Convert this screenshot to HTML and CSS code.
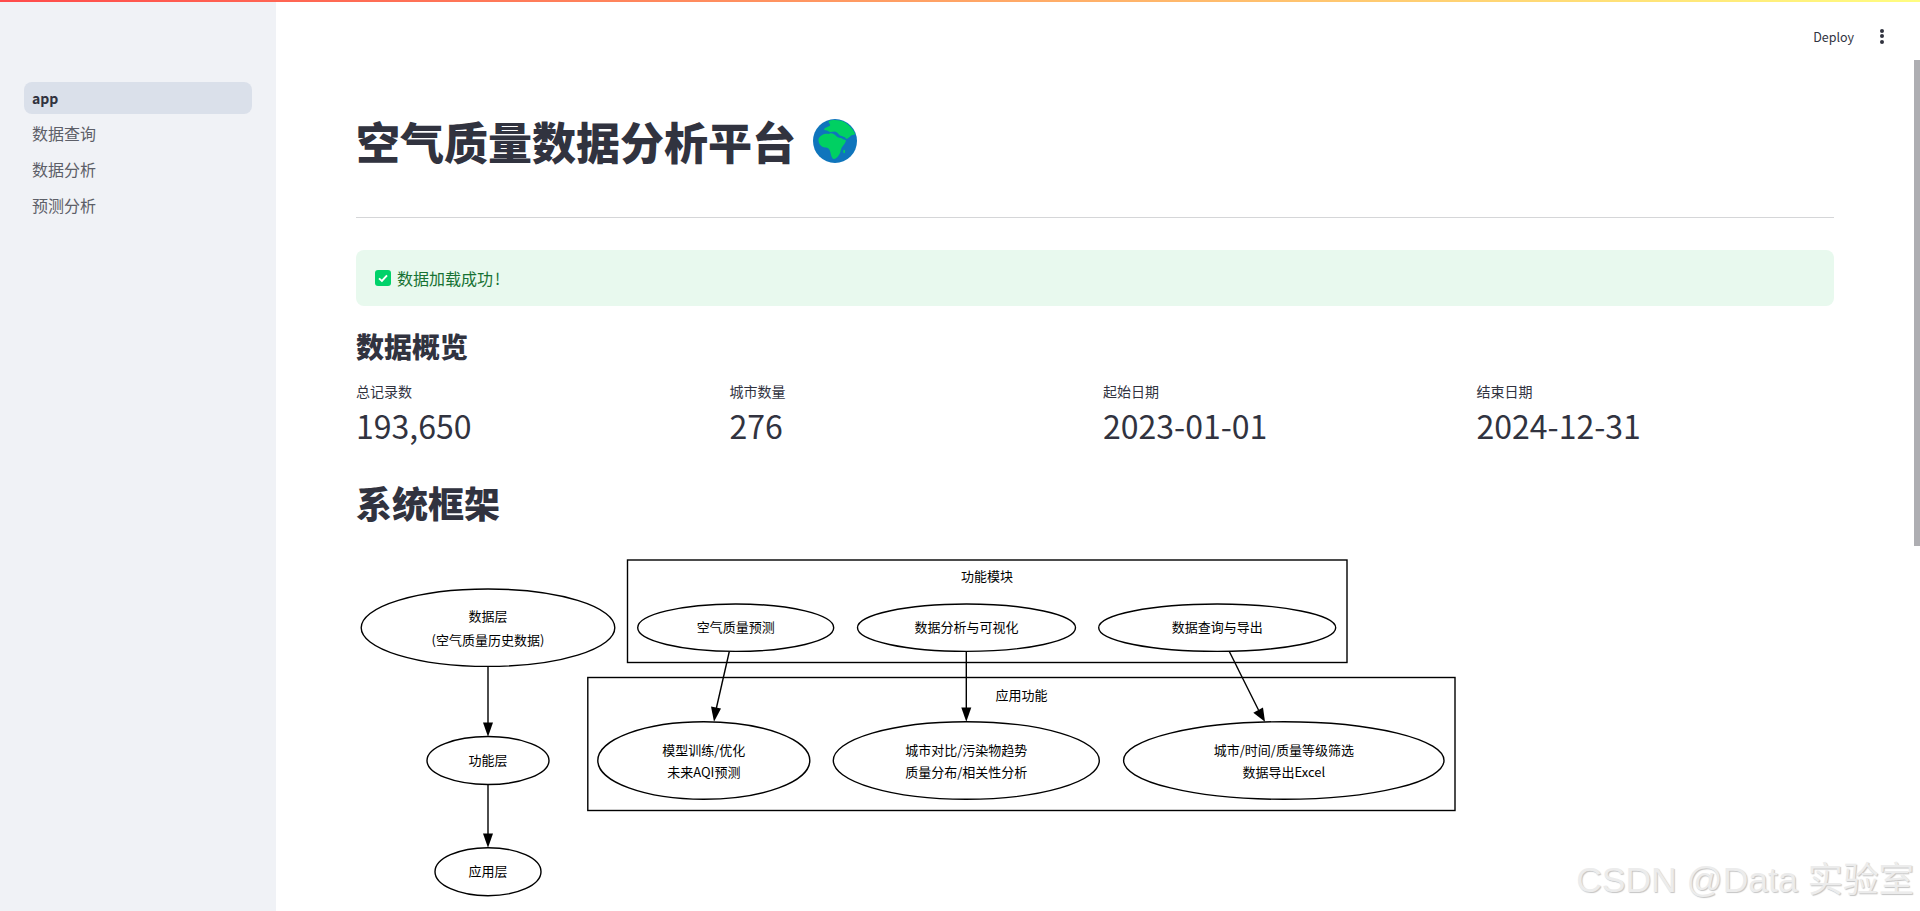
FILE: index.html
```html
<!DOCTYPE html>
<html lang="zh-CN">
<head>
    <meta charset="UTF-8">
    <meta name="viewport" content="width=device-width, initial-scale=1.0">
    <title>空气质量数据分析平台</title>
    <link rel="stylesheet" href="styles.css">
</head>
<body>
    <div class="top-line"></div>

    <div class="app">
        <aside class="sidebar">
            <nav class="nav">
                <a class="nav-item active">app</a>
                <a class="nav-item">数据查询</a>
                <a class="nav-item">数据分析</a>
                <a class="nav-item">预测分析</a>
            </nav>
        </aside>

        <main class="main">
            <header class="topbar">
                <span class="deploy">Deploy</span>
                <span class="kebab"><i></i><i></i><i></i></span>
            </header>

            <div class="content">
                <h1 class="title">空气质量数据分析平台
                    <svg class="globe" viewBox="0 0 130 130">
                        <circle cx="65" cy="65" r="65" fill="#0f75bc"/>
                        <path class="land" d="M47 6 C58 1 80 2 95 10 C108 18 118 30 125 44 C120 48 114 46 111 50 C106 54 102 60 98 58 C94 52 88 52 80 49 C74 44 72 38 64 37 C56 38 50 40 46 36 C42 32 36 36 32 30 C36 24 44 24 50 20 C54 16 44 12 47 6 Z"/>
                        <path class="land" d="M16 60 C20 48 34 42 46 44 C54 40 64 44 70 52 C76 58 84 54 88 60 C92 62 98 60 97 66 C93 77 84 82 82 92 C80 105 71 116 62 118 C55 118 53 105 51 97 C49 89 45 85 39 84 C26 86 16 75 16 60 Z"/>
                        <path class="land" d="M90 92 C94 88 96 94 94 100 C91 104 88 98 90 92 Z"/>
                    </svg>
                </h1>
                <hr class="divider">

                <div class="alert">
                    <svg class="alert-icon" viewBox="0 0 16 16">
                        <rect width="16" height="16" rx="3" fill="#00d26a"/>
                        <path d="M4 8.4 L6.9 11 L12 5.4" fill="none" stroke="#fff" stroke-width="1.9"/>
                    </svg>
                    <span>数据加载成功<span class="bang">!</span></span>
                </div>

                <h3 class="sub-heading">数据概览</h3>

                <div class="metrics">
                    <div class="metric">
                        <div class="metric-label">总记录数</div>
                        <div class="metric-value">193,650</div>
                    </div>
                    <div class="metric">
                        <div class="metric-label">城市数量</div>
                        <div class="metric-value">276</div>
                    </div>
                    <div class="metric">
                        <div class="metric-label">起始日期</div>
                        <div class="metric-value">2023-01-01</div>
                    </div>
                    <div class="metric">
                        <div class="metric-label">结束日期</div>
                        <div class="metric-value">2024-12-31</div>
                    </div>
                </div>

                <h2 class="section-heading">系统框架</h2>

                <!-- viewBox uses the same numbers as the page so the nodes are easy to check -->
                <svg class="diagram" viewBox="356 550 1110 361">
                    <rect class="shape" x="627.5" y="560" width="719.5" height="102.5"/>
                    <rect class="shape" x="587.8" y="677.5" width="867.2" height="133"/>

                    <ellipse class="shape" cx="488" cy="627.7" rx="126.8" ry="38.7"/>
                    <ellipse class="shape" cx="488" cy="760.5" rx="61" ry="24"/>
                    <ellipse class="shape" cx="488" cy="871.7" rx="53" ry="24"/>

                    <ellipse class="shape" cx="735.7" cy="627.7" rx="98" ry="23.7"/>
                    <ellipse class="shape" cx="966.5" cy="627.7" rx="109" ry="23.7"/>
                    <ellipse class="shape" cx="1217.2" cy="627.7" rx="118.5" ry="23.7"/>

                    <ellipse class="shape" cx="703.8" cy="760.5" rx="106" ry="38.8"/>
                    <ellipse class="shape" cx="966.3" cy="760.5" rx="133" ry="38.8"/>
                    <ellipse class="shape" cx="1283.8" cy="760.5" rx="160.2" ry="38.8"/>

                    <line class="edge" x1="488" y1="666.4" x2="488" y2="723"/>
                    <polygon class="head" points="483,722.5 493,722.5 488,736.7"/>
                    <line class="edge" x1="488" y1="784.5" x2="488" y2="834"/>
                    <polygon class="head" points="483,833.5 493,833.5 488,847.7"/>

                    <line class="edge" x1="729.3" y1="651.5" x2="716.4" y2="708"/>
                    <polygon class="head" points="711,706.5 721,708.5 714,721.7"/>
                    <line class="edge" x1="966.3" y1="651.5" x2="966.3" y2="708"/>
                    <polygon class="head" points="961.3,707.5 971.3,707.5 966.3,721.7"/>
                    <line class="edge" x1="1229.3" y1="651.5" x2="1258.5" y2="710"/>
                    <polygon class="head" points="1253.3,712.7 1263,707.5 1265,721.7"/>

                    <text class="label" x="987" y="581">功能模块</text>
                    <text class="label" x="1021.5" y="699.5">应用功能</text>

                    <text class="label" x="488" y="621">数据层</text>
                    <text class="label" x="488" y="645">(空气质量历史数据)</text>
                    <text class="label" x="488" y="765">功能层</text>
                    <text class="label" x="488" y="876">应用层</text>

                    <text class="label" x="735.7" y="632">空气质量预测</text>
                    <text class="label" x="966.5" y="632">数据分析与可视化</text>
                    <text class="label" x="1217.2" y="632">数据查询与导出</text>

                    <text class="label" x="703.8" y="754.5">模型训练/优化</text>
                    <text class="label" x="703.8" y="776.5">未来AQI预测</text>
                    <text class="label" x="966.3" y="754.5">城市对比/污染物趋势</text>
                    <text class="label" x="966.3" y="776.5">质量分布/相关性分析</text>
                    <text class="label" x="1283.8" y="754.5">城市/时间/质量等级筛选</text>
                    <text class="label" x="1283.8" y="776.5">数据导出Excel</text>
                </svg>
            </div>
        </main>
    </div>

    <div class="scroll-thumb"></div>
    <div class="watermark">CSDN @Data 实验室</div>
</body>
</html>
```

FILE: styles.css
```css
html, body {
    margin: 0;
    padding: 0;
    height: 911px;
    overflow: hidden;
    background: #fff;
}

body {
    font-family: "Noto Sans CJK SC", "Noto Sans", sans-serif;
    color: #31333f;
}

.top-line {
    height: 2px;
    background: linear-gradient(90deg, #ff4b4b, #fffd80);
}

.app {
    display: flex;
    height: 909px;
}

/* sidebar */
.sidebar {
    width: 276px;
    flex-shrink: 0;
    box-sizing: border-box;
    padding: 80px 24px 0;
    background: #f0f2f6;
}

.nav {
    display: flex;
    flex-direction: column;
    gap: 4px;
}

.nav-item {
    display: flex;
    align-items: center;
    height: 32px;
    box-sizing: border-box;
    padding: 0 0 2px 8px;
    border-radius: 8px;
    font-size: 16px;
    color: #5d5f68;
}

.nav-item.active {
    padding-bottom: 0;
    background: #dae0ea;
    color: #31333f;
    font-weight: 700;
    font-size: 14px;
}

/* main column */
.main {
    flex: 1;
    min-width: 0;
}

.topbar {
    display: flex;
    justify-content: flex-end;
    align-items: center;
    gap: 26px;
    height: 68px;
    padding-right: 36px;
    box-sizing: border-box;
}

.deploy {
    font-size: 12.5px;
}

.kebab {
    display: flex;
    flex-direction: column;
    gap: 1.5px;
}

.kebab i {
    display: block;
    width: 4px;
    height: 4px;
    border-radius: 50%;
    background: #31333f;
}

.content {
    padding: 0 86px 0 80px;
}

.title {
    display: flex;
    align-items: center;
    gap: 17px;
    margin: 0;
    padding-top: 39px;
    font-size: 44px;
    line-height: 64px;
    font-weight: 900;
}

.globe {
    width: 44px;
    height: 44px;
}

.land {
    fill: #00d062;
}

.divider {
    margin: 44px 0 32px;
    border: 0;
    border-top: 1px solid #d5d6d8;
}

.alert {
    display: flex;
    align-items: center;
    gap: 6px;
    height: 56px;
    padding-left: 19px;
    box-sizing: border-box;
    border-radius: 8px;
    background: #e8f9ee;
    color: #177233;
    font-size: 16px;
}

.alert-icon {
    width: 16px;
    height: 16px;
}

.bang {
    margin-left: 2px;
}

.sub-heading {
    margin: 16px 0 0;
    font-size: 28px;
    line-height: 48px;
    font-weight: 900;
}

.metrics {
    display: grid;
    grid-template-columns: repeat(4, 1fr);
    gap: 16px;
    margin-top: 11px;
}

.metric-label {
    font-size: 14px;
    line-height: 20px;
}

.metric-value {
    font-size: 32px;
    line-height: 48px;
}

.section-heading {
    margin: 23px 0 0;
    font-size: 36px;
    line-height: 60px;
    font-weight: 900;
}

.diagram {
    display: block;
    width: 1110px;
    height: 361px;
    margin-top: 18px;
}

.shape {
    fill: none;
    stroke: #000;
    stroke-width: 1.4;
}

.edge {
    stroke: #000;
    stroke-width: 1.4;
}

.head {
    fill: #000;
}

.label {
    font-size: 13px;
    text-anchor: middle;
    fill: #000;
}

/* things sitting on top of the page */
.scroll-thumb {
    position: absolute;
    top: 60px;
    right: 0;
    width: 6px;
    height: 486px;
    background: #aeaeb2;
}

.watermark {
    position: absolute;
    right: 6px;
    bottom: 9px;
    font-family: "Liberation Sans", "Noto Sans CJK SC", sans-serif;
    font-size: 35.5px;
    color: #ececec;
    text-shadow: 1px 1px 1px #c4c4c4;
}
```
